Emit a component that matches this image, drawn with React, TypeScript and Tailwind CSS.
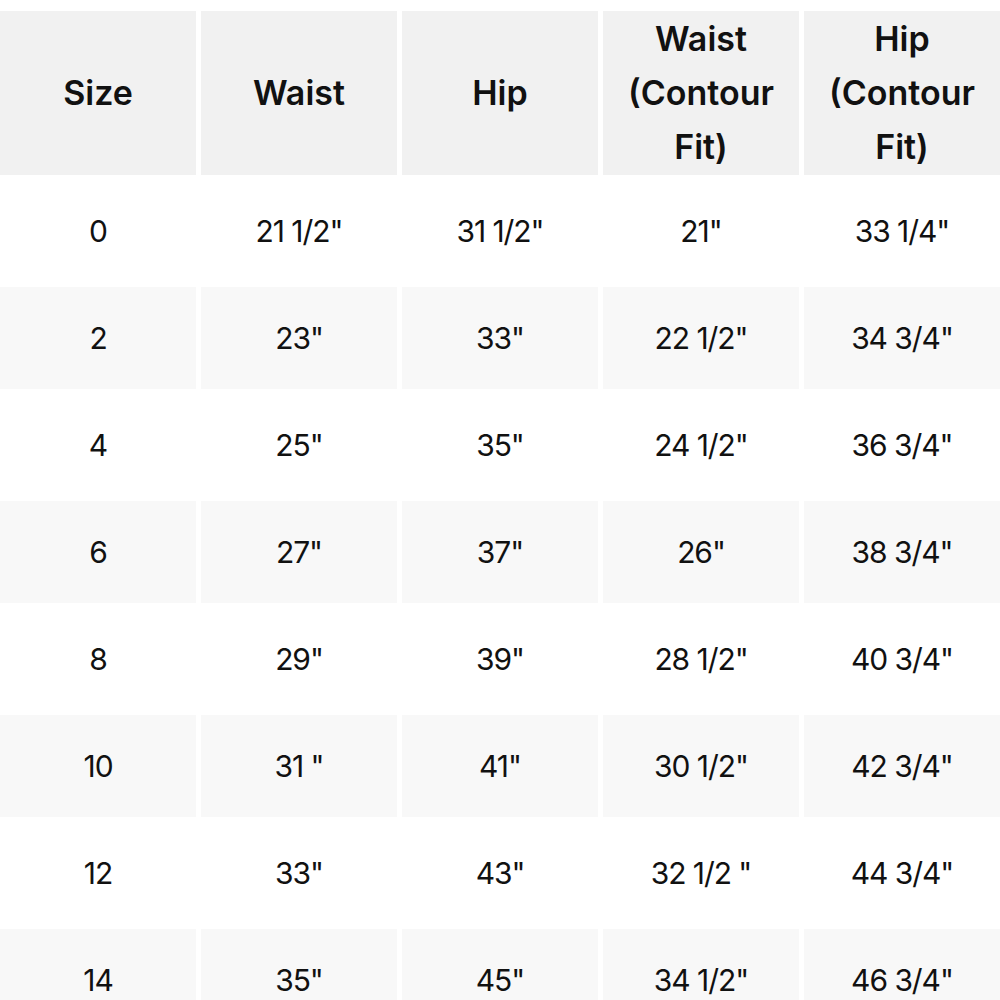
const headers = ["Size", "Waist", "Hip", "Waist (Contour Fit)", "Hip (Contour Fit)"];

const rows = [
  ["0", '21 1/2"', '31 1/2"', '21"', '33 1/4"'],
  ["2", '23"', '33"', '22 1/2"', '34 3/4"'],
  ["4", '25"', '35"', '24 1/2"', '36 3/4"'],
  ["6", '27"', '37"', '26"', '38 3/4"'],
  ["8", '29"', '39"', '28 1/2"', '40 3/4"'],
  ["10", '31 "', '41"', '30 1/2"', '42 3/4"'],
  ["12", '33"', '43"', '32 1/2 "', '44 3/4"'],
  ["14", '35"', '45"', '34 1/2"', '46 3/4"'],
];

export default function App() {
  return (
    <div
      className="w-[1000px] h-[1000px] overflow-hidden bg-white pt-[11px] text-[#111]"
      style={{ fontFamily: "Inter, 'Noto Sans', sans-serif" }}
    >
      <div className="flex flex-col gap-[5px]">
        <div className="flex gap-[5px]">
          {headers.map((h) => (
            <div
              key={h}
              className="w-[196px] h-[164px] shrink-0 bg-[#f1f1f1] flex items-center justify-center text-center px-4 text-[34px] font-semibold leading-[54px]"
            >
              {h}
            </div>
          ))}
        </div>
        {rows.map((r, i) => (
          <div key={i} className="flex gap-[5px]">
            {r.map((c, j) => (
              <div
                key={j}
                className={`w-[196px] h-[102px] shrink-0 flex items-center justify-center text-[30px] tracking-[-0.035em] ${
                  i % 2 === 1 ? "bg-[#f8f8f8]" : "bg-white"
                }`}
              >
                {c}
              </div>
            ))}
          </div>
        ))}
      </div>
    </div>
  );
}
